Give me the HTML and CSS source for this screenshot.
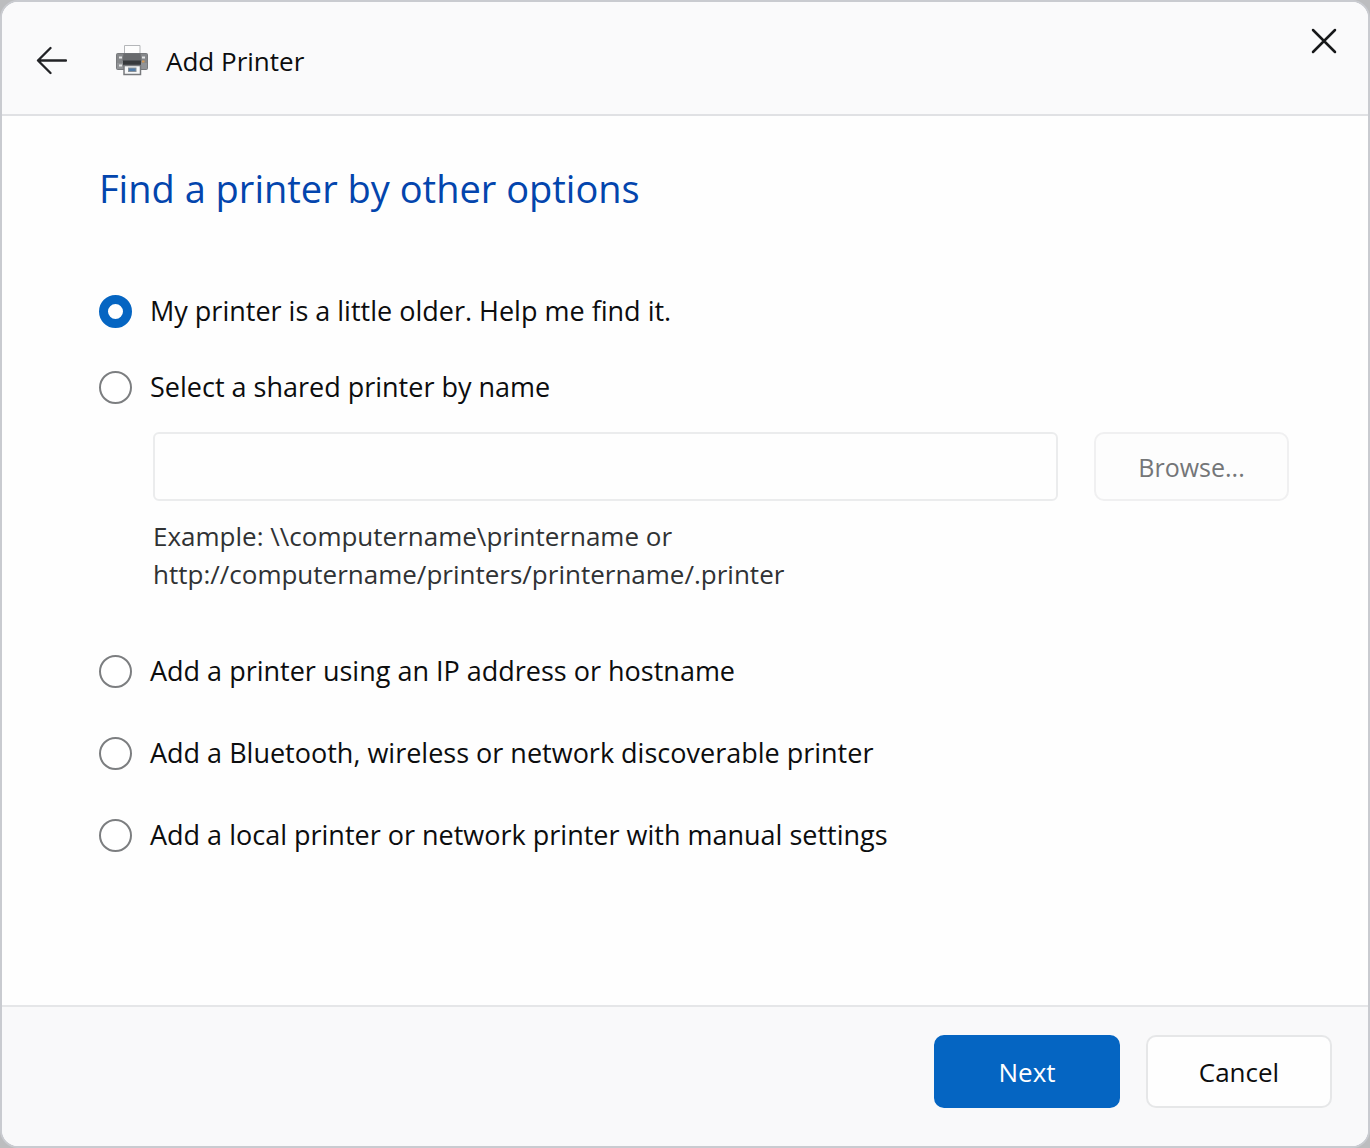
FILE: index.html
```html
<!DOCTYPE html>
<html lang="en">
<head>
<meta charset="utf-8">
<meta name="viewport" content="width=device-width, initial-scale=1">
<title>Add Printer</title>
<link rel="stylesheet" href="styles.css">
</head>
<body>
<form class="dialog">
  <header class="titlebar">
    <button class="icon-button" type="button" aria-label="Back">
      <svg width="32" height="32" viewBox="0 0 32 32" fill="none" stroke="#222326" stroke-width="2.300" stroke-linecap="round" stroke-linejoin="round"><path d="M31 15.500H3M15.500 3L3 15.500L15.500 28"/></svg>
    </button>
    <svg class="printer" width="32" height="32" viewBox="0 0 32 32" aria-hidden="true">
      <path d="M8.500 10V.5H24V10" fill="#fdfdfd" stroke="#b4b6b9"/>
      <rect x=".5" y="8.500" width="31" height="16" rx="1" fill="#85878a" stroke="#77797c"/>
      <path d="M7.500 8.500H24.500L25.500 16H6.500Z" fill="#696b6e"/>
      <path d="M1 18H31V24H1Z" fill="#919396"/>
      <path d="M7 15.500H25V20.500H7Z" fill="#37393c"/>
      <path d="M3 11.500H6V13.500H3ZM3 19.500H6V21.500H3ZM26 11.500H29V13.500H26Z" fill="#e4e5e6"/>
      <path d="M26 15.500H28.500V17.500H26Z" fill="#d49a55"/>
      <path d="M8 20.500H24.500V29.500H8Z" fill="#f7f8f9" stroke="#77797c" stroke-width="1.500"/>
      <rect x="12.500" y="23" width="7.500" height="3.500" fill="#527ca8" stroke="#8a9299"/>
    </svg>
    <span class="title">Add Printer</span>
    <button class="icon-button close" type="button" aria-label="Close">
      <svg width="32" height="32" viewBox="0 0 32 32" fill="none" stroke="#17181a" stroke-width="2.500" stroke-linecap="round"><path d="M5 5L27 27M27 5L5 27"/></svg>
    </button>
  </header>
  <main class="content">
    <h1 class="heading">Find a printer by other options</h1>
    <div class="options">
      <label class="option"><input class="radio" type="radio" name="method" checked>My printer is a little older. Help me find it.</label>
      <div class="shared">
        <label class="option"><input class="radio" type="radio" name="method">Select a shared printer by name</label>
        <div class="path-row">
          <input class="path" type="text" aria-label="Shared printer name" aria-describedby="example" disabled>
          <button class="button browse" type="button" disabled>Browse...</button>
        </div>
        <p class="example" id="example">Example: \\computername\printername or<br>http://computername/printers/printername/.printer</p>
      </div>
      <div class="more">
        <label class="option"><input class="radio" type="radio" name="method">Add a printer using an IP address or hostname</label>
        <label class="option"><input class="radio" type="radio" name="method">Add a Bluetooth, wireless or network discoverable printer</label>
        <label class="option"><input class="radio" type="radio" name="method">Add a local printer or network printer with manual settings</label>
      </div>
    </div>
  </main>
  <footer class="footer">
    <button class="button primary" type="button">Next</button>
    <button class="button" type="button">Cancel</button>
  </footer>
</form>
</body>
</html>
```
FILE: styles.css
```css
* { box-sizing: border-box; }
body {
  margin: 0;
  background: #bcbdbf;
  color: #0c0d0e;
  font: 26px/38px "Segoe UI", "Open Sans", sans-serif;
}
.dialog {
  display: flex;
  flex-direction: column;
  min-height: 100vh;
  border: 2px solid #c9cbd0;
  border-radius: 18px;
  background: #fefefe;
  overflow: hidden;
}
.titlebar {
  display: flex;
  align-items: center;
  height: 114px;
  padding: 6px 28px 0 33px;
  background: #fafafb;
  border-bottom: 2px solid #e0e1e4;
}
.icon-button {
  display: flex;
  padding: 0;
  border: 0;
  background: none;
}
.printer { margin: 0 18px 0 49px; }
.close {
  align-self: flex-start;
  margin: 17px 0 0 auto;
}
.content {
  flex: 1;
  padding: 46px 79px 48px 97px;
}
.heading {
  margin: 0 0 78px;
  color: #0345ad;
  font-size: 38px;
  font-weight: 400;
  line-height: 52px;
}
.options {
  display: flex;
  flex-direction: column;
  gap: 38px;
}
.option {
  display: flex;
  align-items: center;
  gap: 18px;
  font-size: 27px;
}
.radio {
  appearance: none;
  flex: none;
  width: 33px;
  height: 33px;
  margin: 0;
  border: 2px solid #7c7e80;
  border-radius: 50%;
  background: #fff;
}
.radio:checked { border: 9px solid #0565c2; }
.path-row {
  display: flex;
  gap: 36px;
  margin: 26px 0 16px 54px;
}
.path {
  flex: 1;
  min-width: 0;
  height: 69px;
  padding: 0 16px;
  border: 2px solid #ebeced;
  border-radius: 6px;
  background: #fefefe;
  font: inherit;
}
.button {
  width: 186px;
  height: 73px;
  border: 2px solid #e6e7e8;
  border-radius: 10px;
  background: #fefefe;
  color: inherit;
  font: inherit;
}
.browse {
  width: 195px;
  height: 69px;
  border-color: #f0f0f1;
  background: #fdfdfd;
  color: #747678;
  font-size: 25px;
}
.primary {
  border-color: #0565c2;
  background: #0565c2;
  color: #fff;
}
.example {
  margin: 0 0 0 54px;
  color: #303234;
}
.more {
  display: flex;
  flex-direction: column;
  gap: 44px;
  margin-top: 21px;
}
.footer {
  display: flex;
  justify-content: flex-end;
  gap: 26px;
  padding: 28px 36px 38px;
  border-top: 2px solid #e5e6e8;
  background: #f9f9fa;
}
```
